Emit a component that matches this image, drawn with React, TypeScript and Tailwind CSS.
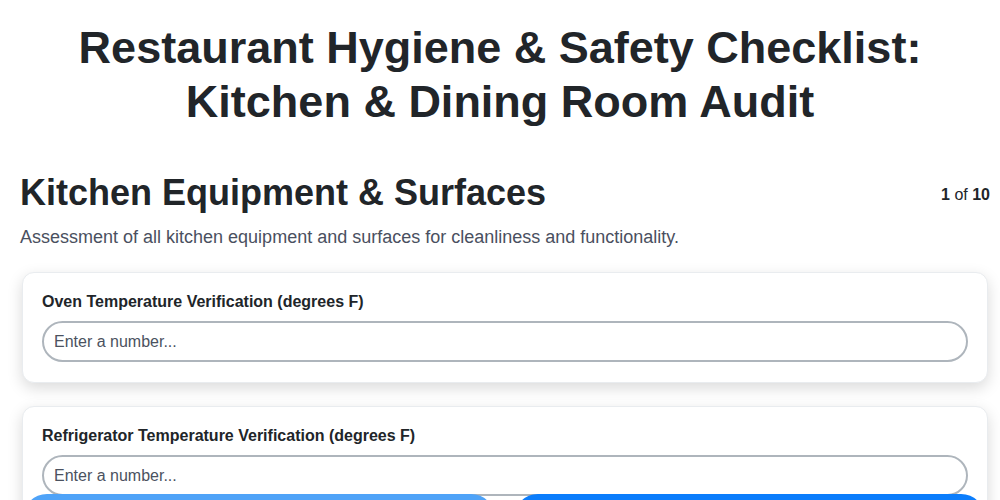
import React from "react";

const fields = [
  "Oven Temperature Verification (degrees F)",
  "Refrigerator Temperature Verification (degrees F)",
];

export default function App() {
  return (
    <div
      className="min-h-[500px] bg-white text-[#212529]"
      style={{ fontFamily: '"Liberation Sans", Arial, sans-serif' }}
    >
      <h1 className="pt-[21px] text-center text-[45px] font-bold leading-[1.2] text-[#212529]">
        Restaurant Hygiene &amp; Safety Checklist:
        <br />
        Kitchen &amp; Dining Room Audit
      </h1>

      <div className="pl-[20px] pr-[10px]">
        <div className="mt-[42px] flex items-start justify-between">
          <h2 className="text-[36px] font-bold leading-[1.2] text-[#212529]">
            Kitchen Equipment &amp; Surfaces
          </h2>
          <div className="mt-[12px] text-[16px] text-[#212529]">
            <span className="font-bold">1</span> of <span className="font-bold">10</span>
          </div>
        </div>
        <p className="mt-[10px] text-[18px] leading-[1.5] text-[#4a5060]">
          Assessment of all kitchen equipment and surfaces for cleanliness and functionality.
        </p>

        <div className="mt-[21px] flex flex-col gap-[23px]">
          {fields.map((f) => (
            <div
              key={f}
              className="mx-[2px] rounded-[12px] border border-[#e9ecef] bg-white px-[19px] pt-[17px] pb-[20px] shadow-[0_5px_15px_rgba(0,0,0,0.15)]"
            >
              <label className="block text-[16px] font-bold leading-[1.5] text-[#212529]">
                {f}
              </label>
              <input
                type="text"
                placeholder="Enter a number..."
                className="mt-[7px] block h-[41px] w-full rounded-full border-2 border-[#aeb5bc] bg-white px-[10px] text-[16px] text-[#212529] outline-none placeholder:text-[#4b5260]"
              />
            </div>
          ))}
        </div>
      </div>

      <div className="fixed left-[23px] right-[15px] top-[494px] flex gap-[19px]">
        <div className="h-[48px] flex-1 rounded-full bg-[#4fa3f8]" />
        <div className="h-[48px] flex-1 rounded-full bg-[#0b7dfc]" />
      </div>
    </div>
  );
}
